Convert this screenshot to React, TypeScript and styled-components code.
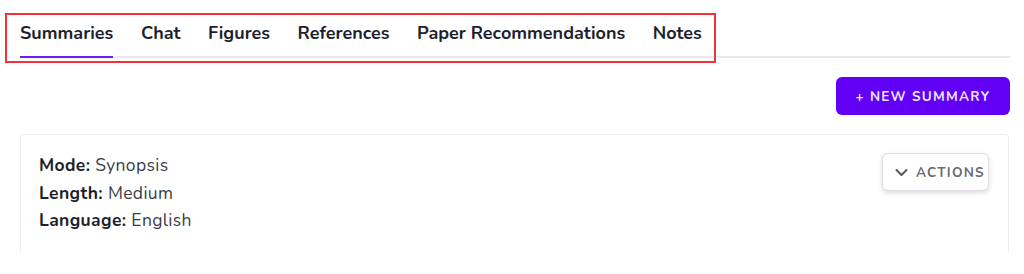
import React from "react";
import styled, { createGlobalStyle } from "styled-components";

const Global = createGlobalStyle`
  html, body { margin: 0; padding: 0; background: #ffffff; }
  body { font-family: "Nunito", Lato, "Noto Sans", sans-serif; }
  * { box-sizing: border-box; }
`;

const Page = styled.div`
  position: relative;
  width: 1024px;
  height: 274px;
  padding: 0 14px 0 20px;
  overflow: hidden;
`;

const TabBar = styled.nav`
  display: flex;
  gap: 27.5px;
  padding-top: 21px;
  border-bottom: 2px solid #e9e9ef;
`;

const Tab = styled.div<{ $active?: boolean }>`
  font-size: 18px;
  font-weight: 700;
  letter-spacing: 0;
  color: #1e1f2e;
  line-height: 24px;
  padding-bottom: 11px;
  margin-bottom: -2px;
  border-bottom: 2px solid ${(p) => (p.$active ? "#6a1cf6" : "transparent")};
  white-space: nowrap;
`;

const Highlight = styled.div`
  position: absolute;
  left: 5px;
  top: 13px;
  width: 711px;
  height: 50px;
  border: 2px solid #f2343a;
  pointer-events: none;
`;

const Toolbar = styled.div`
  display: flex;
  justify-content: flex-end;
  margin-top: 19px;
`;

const PrimaryButton = styled.button`
  height: 38px;
  width: 174px;
  border: none;
  border-radius: 6px;
  background: #6100f4;
  color: #eee6ff;
  font-family: inherit;
  font-size: 13.5px;
  font-weight: 700;
  letter-spacing: 1.3px;
  text-transform: uppercase;
`;

const CardClip = styled.div`
  margin-top: 19px;
  height: 118px;
  overflow: hidden;
`;

const Card = styled.section`
  display: flex;
  justify-content: space-between;
  align-items: flex-start;
  width: 989px;
  height: 160px;
  border: 1px solid #ececf0;
  border-radius: 4px;
  padding: 17px 19px 0 18px;
`;

const Meta = styled.div`
  display: flex;
  flex-direction: column;
`;

const MetaLine = styled.div`
  font-size: 17.5px;
  letter-spacing: 0.35px;
  line-height: 27.5px;
  color: #3b3c48;
`;

const Label = styled.strong`
  font-weight: 700;
  color: #1e1f2e;
`;

const ActionsButton = styled.button`
  display: flex;
  align-items: center;
  gap: 7px;
  height: 38px;
  width: 107px;
  margin-top: 1px;
  padding: 0 0 0 11px;
  border: 1px solid #dedee4;
  border-radius: 6px;
  background: #ffffff;
  box-shadow: 0 2px 5px rgba(0, 0, 0, 0.14);
  color: #6a6b75;
  font-family: inherit;
  font-size: 13.5px;
  font-weight: 700;
  letter-spacing: 1.2px;
  text-transform: uppercase;
`;

const Chevron = () => (
  <svg width="15" height="15" viewBox="0 0 24 24" fill="none" stroke="#55565f" strokeWidth="3.2" strokeLinecap="round" strokeLinejoin="round">
    <path d="M4 8l8 8 8-8" />
  </svg>
);

const tabs = ["Summaries", "Chat", "Figures", "References", "Paper Recommendations", "Notes"];

export default function App() {
  return (
    <>
      <Global />
      <Page>
        <TabBar>
          {tabs.map((t, i) => (
            <Tab key={t} $active={i === 0}>
              {t}
            </Tab>
          ))}
        </TabBar>
        <Highlight />
        <Toolbar>
          <PrimaryButton>+ New Summary</PrimaryButton>
        </Toolbar>
        <CardClip>
          <Card>
            <Meta>
              <MetaLine>
                <Label>Mode:</Label> Synopsis
              </MetaLine>
              <MetaLine>
                <Label>Length:</Label> Medium
              </MetaLine>
              <MetaLine>
                <Label>Language:</Label> English
              </MetaLine>
            </Meta>
            <ActionsButton>
              <Chevron />
              Actions
            </ActionsButton>
          </Card>
        </CardClip>
      </Page>
    </>
  );
}
